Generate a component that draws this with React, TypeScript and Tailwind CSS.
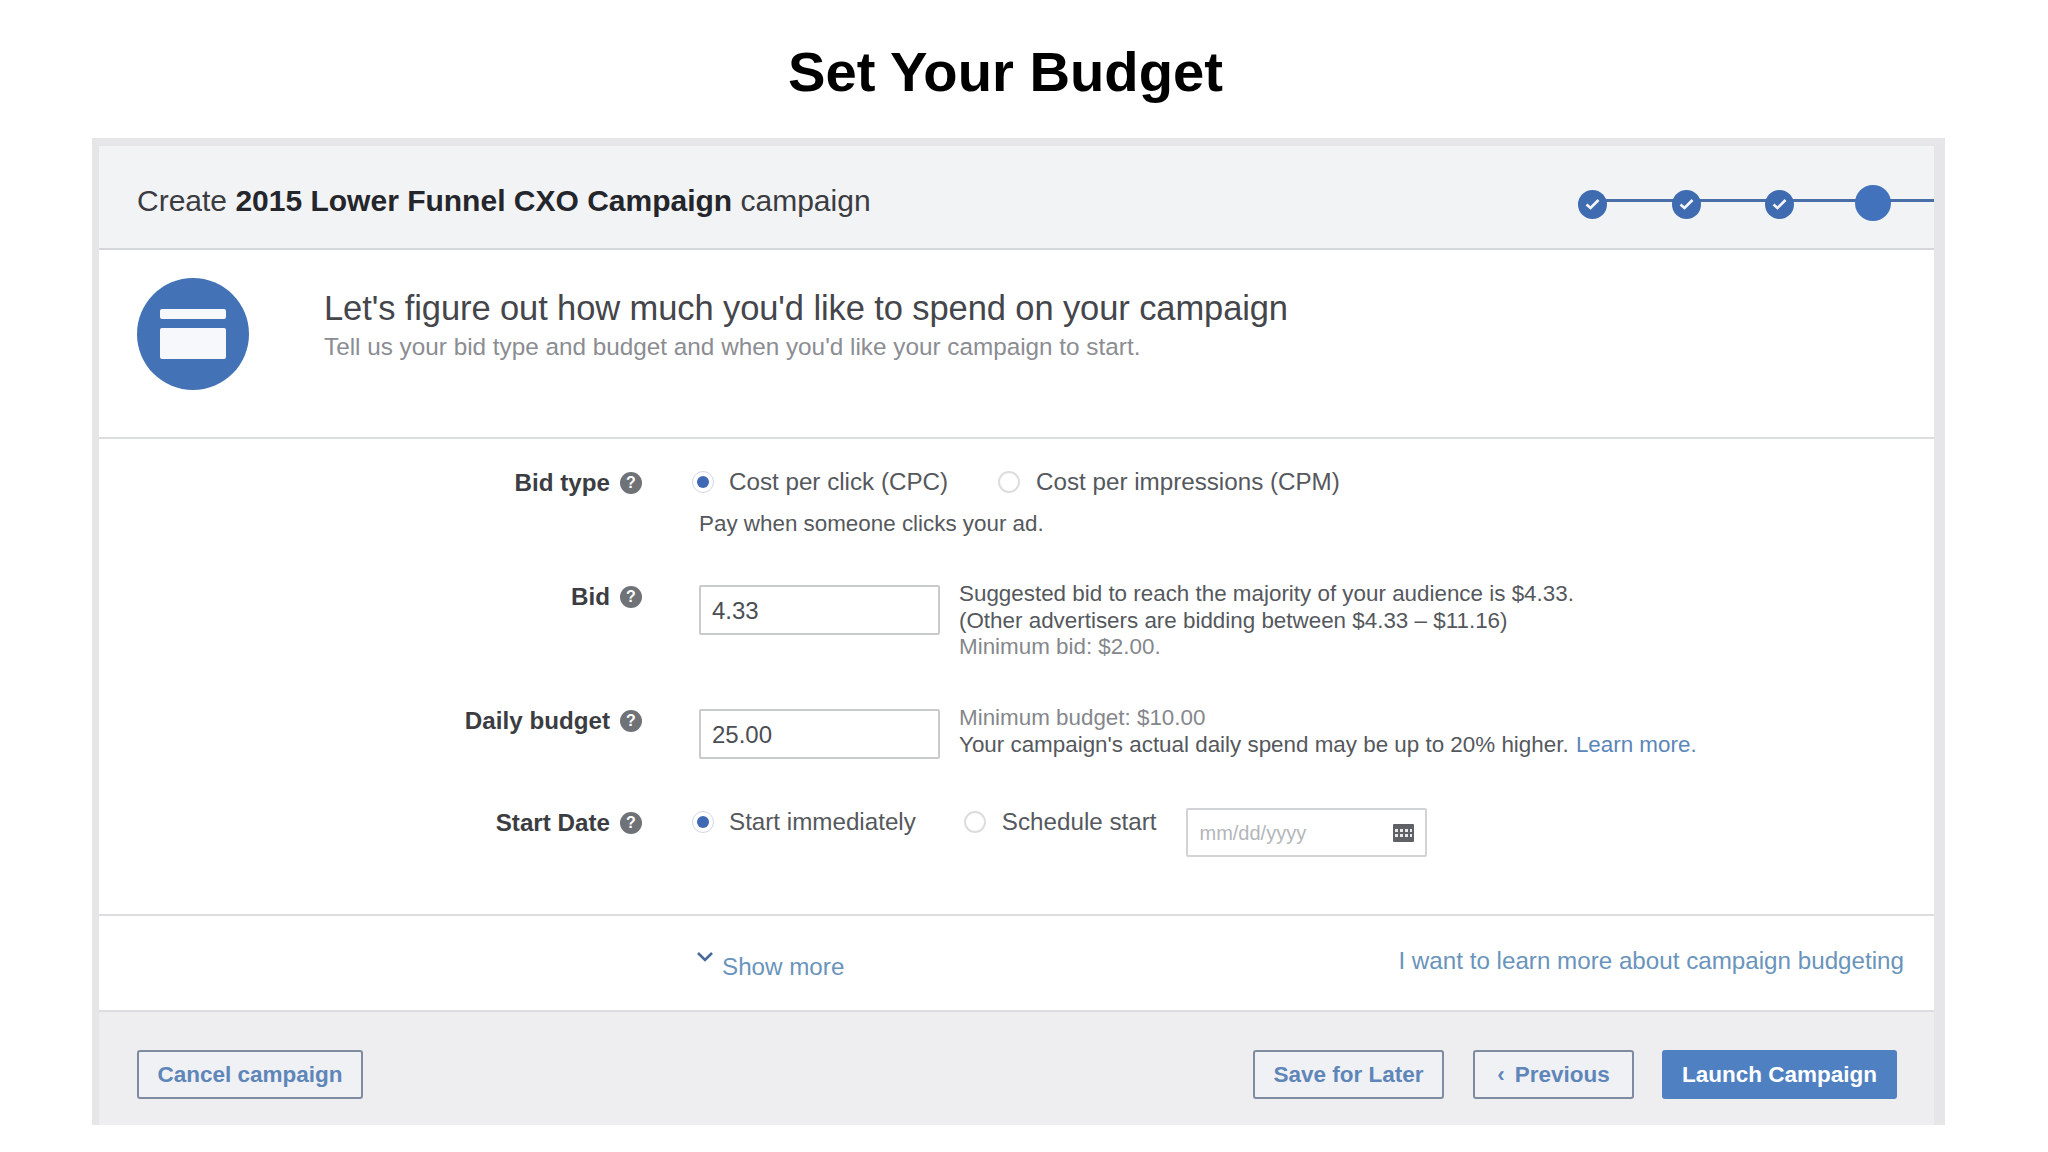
const sans = "font-['Liberation_Sans',Arial,sans-serif]";

function Help() {
  return (
    <span className="flex h-[22px] w-[22px] shrink-0 items-center justify-center rounded-full bg-[#6f7277] text-[16px] font-bold leading-none text-white">
      ?
    </span>
  );
}

function Radio({ on, className = "" }: { on?: boolean; className?: string }) {
  return on ? (
    <span className={`flex h-[22px] w-[22px] shrink-0 items-center justify-center rounded-full border border-[#cfd8e8] bg-white ${className}`}>
      <span className="h-[12px] w-[12px] rounded-full bg-[#3f68b5]" />
    </span>
  ) : (
    <span className={`block h-[22px] w-[22px] shrink-0 rounded-full border-2 border-[#dcdde0] bg-white ${className}`} />
  );
}

function Step({ last, className = "" }: { last?: boolean; className?: string }) {
  return last ? (
    <span className={`relative z-10 block h-[36px] w-[36px] rounded-full bg-[#4272bb] ${className}`} />
  ) : (
    <span className={`relative z-10 mt-[3px] flex h-[29px] w-[29px] items-center justify-center rounded-full bg-[#3f6cb0] ${className}`}>
      <svg width="17" height="14" viewBox="0 0 17 14" fill="none">
        <path d="M2.5 7.5 L6.5 11 L14.5 3" stroke="#f4f6fa" strokeWidth="2.6" />
      </svg>
    </span>
  );
}

function Label({ text, mt }: { text: string; mt: string }) {
  return (
    <div className={`flex items-center justify-end gap-[10px] self-start ${mt}`}>
      <span className="text-[24.2px] font-bold leading-[26px] text-[#3b3d42]">{text}</span>
      <Help />
    </div>
  );
}

function Button({ children, w }: { children: React.ReactNode; w: string }) {
  return (
    <button className={`flex h-[49px] ${w} items-center justify-center rounded-[3px] border-2 border-[#7f8ba0] bg-[#f0f1f4] pt-[1px] text-[22.5px] font-bold text-[#5f86b8]`}>
      {children}
    </button>
  );
}

export default function App() {
  return (
    <div className={`h-[1152px] w-[2048px] overflow-hidden bg-white ${sans}`}>
      <h1 className="h-[138px] pr-[37px] pt-[39px] text-center text-[56.2px] font-bold leading-[66px] text-black">
        Set Your Budget
      </h1>
      <div className="ml-[92px] flex h-[987px] w-[1853px] flex-col bg-[#e6e6e8] pl-[7px] pr-[11px] pt-[8px]">
        <div className="flex h-[104px] shrink-0 items-center justify-between border-b-2 border-[#d5d6d9] bg-[#f2f3f5] pl-[38px]">
          <div className="pt-[8px] text-[30px] leading-[36px] text-[#3a3c41]">
            Create <b className="text-[#24262b]">2015 Lower Funnel CXO Campaign</b> campaign
          </div>
          <div className="relative mt-[11px] flex h-[36px] w-[356px] items-center">
            <span className="absolute left-[10px] right-0 top-[14px] h-[3px] bg-[#4a6ea8]" />
            <Step />
            <Step className="ml-[65px]" />
            <Step className="ml-[64px]" />
            <Step last className="ml-[61px]" />
          </div>
        </div>

        <div className="flex h-[189px] shrink-0 border-b-2 border-[#dcdde0] bg-white pl-[38px] pt-[28px]">
          <div className="flex h-[112px] w-[112px] shrink-0 items-center justify-center rounded-full bg-[#4472b6]">
            <div className="flex h-[50px] w-[66px] flex-col justify-between">
              <div className="h-[10px] rounded-[2px] bg-[#f7f8fb]" />
              <div className="h-[31px] rounded-[2px] bg-[#f7f8fb]" />
            </div>
          </div>
          <div className="ml-[75px]">
            <div className="mt-[10px] text-[34.5px] font-normal leading-[40px] tracking-[-0.1px] text-[#44464b]">
              Let's figure out how much you'd like to spend on your campaign
            </div>
            <div className="mt-[5px] text-[24.3px] leading-[28px] text-[#8b8d92]">
              Tell us your bid type and budget and when you'd like your campaign to start.
            </div>
          </div>
        </div>

        <div className="h-[477px] shrink-0 border-b-2 border-[#dcdde0] bg-white pt-[26px] text-[24.2px] text-[#55585d]">
          <div className="grid grid-cols-[543px_1fr] gap-x-[57px]">
            <Label text="Bid type" mt="mt-[5px]" />
            <div className="h-[116px]">
              <div className="-ml-[7px] flex h-[34px] items-center">
                <Radio on />
                <span className="ml-[15px]">Cost per click (CPC)</span>
                <Radio className="ml-[50px]" />
                <span className="ml-[16px]">Cost per impressions (CPM)</span>
              </div>
              <div className="mt-[10px] text-[22.4px] leading-[30px]">Pay when someone clicks your ad.</div>
            </div>

            <Label text="Bid" mt="mt-[3px]" />
            <div className="flex h-[124px]">
              <input readOnly value="4.33" className="mt-[4px] h-[50px] w-[241px] rounded-[2px] border-2 border-[#c9cacd] bg-white pl-[11px] pt-[2px] text-[24px] text-[#4b4e53] outline-none" />
              <div className="ml-[19px] text-[22.4px] leading-[26.5px]">
                <div>Suggested bid to reach the majority of your audience is $4.33.</div>
                <div>(Other advertisers are bidding between $4.33 – $11.16)</div>
                <div className="text-[#85878c]">Minimum bid: $2.00.</div>
              </div>
            </div>

            <Label text="Daily budget" mt="mt-[3px]" />
            <div className="flex h-[103px]">
              <input readOnly value="25.00" className="mt-[4px] h-[50px] w-[241px] rounded-[2px] border-2 border-[#c9cacd] bg-white pl-[11px] pt-[2px] text-[24px] text-[#4b4e53] outline-none" />
              <div className="ml-[19px] text-[22.4px] leading-[26.5px]">
                <div className="text-[#85878c]">Minimum budget: $10.00</div>
                <div>
                  Your campaign's actual daily spend may be up to 20% higher.{" "}
                  <span className="ml-[1px] text-[#5b86b8]">Learn more.</span>
                </div>
              </div>
            </div>

            <Label text="Start Date" mt="mt-[2px]" />
            <div className="-ml-[7px] flex h-[50px] items-start">
              <div className="flex h-[28px] items-center">
                <Radio on />
                <span className="ml-[15px]">Start immediately</span>
                <Radio className="ml-[48px]" />
                <span className="ml-[16px]">Schedule start</span>
              </div>
              <div className="ml-[30px] flex h-[49px] w-[241px] items-center justify-between rounded-[2px] border-2 border-[#d2d3d6] bg-white pl-[11px] pr-[11px] text-[20px] text-[#b4b6ba]">
                <span>mm/dd/yyyy</span>
                <svg width="21" height="18" viewBox="0 0 21 18">
                  <rect x="0" y="0" width="21" height="18" rx="1" fill="#5f6166" />
                  <path d="M2 5h3v3H2zM7 5h3v3H7zM12 5h3v3h-3zM17 5h2v3h-2zM2 10h3v3H2zM7 10h3v3H7zM12 10h3v3h-3zM17 10h2v3h-2z" fill="#e8e9ea" />
                </svg>
              </div>
            </div>
          </div>
        </div>

        <div className="flex h-[96px] shrink-0 items-start justify-between border-b-2 border-[#dcdde0] bg-white pl-[597px] pr-[30px] text-[24.2px] text-[#6a94bb]">
          <div className="mt-[37px] flex items-start">
            <svg className="mt-[-2px]" width="18" height="12" viewBox="0 0 18 12" fill="none">
              <path d="M2 2 L9 9 L16 2" stroke="#4a6a9c" strokeWidth="2.6" />
            </svg>
            <span className="ml-[8px] leading-[28px]">Show more</span>
          </div>
          <div className="mt-[31px] leading-[28px]">I want to learn more about campaign budgeting</div>
        </div>

        <div className="flex flex-1 items-start justify-between bg-[#eeeef0] pl-[38px] pr-[37px] pt-[38px]">
          <Button w="w-[226px]">Cancel campaign</Button>
          <div className="flex">
            <Button w="w-[191px]">Save for Later</Button>
            <div className="ml-[29px]">
              <Button w="w-[161px]">
                <span className="mr-[10px]">‹</span>Previous
              </Button>
            </div>
            <button className="ml-[28px] h-[49px] w-[235px] rounded-[3px] bg-[#4f81c2] pt-[1px] text-[22.5px] font-bold text-white">
              Launch Campaign
            </button>
          </div>
        </div>
      </div>
    </div>
  );
}
